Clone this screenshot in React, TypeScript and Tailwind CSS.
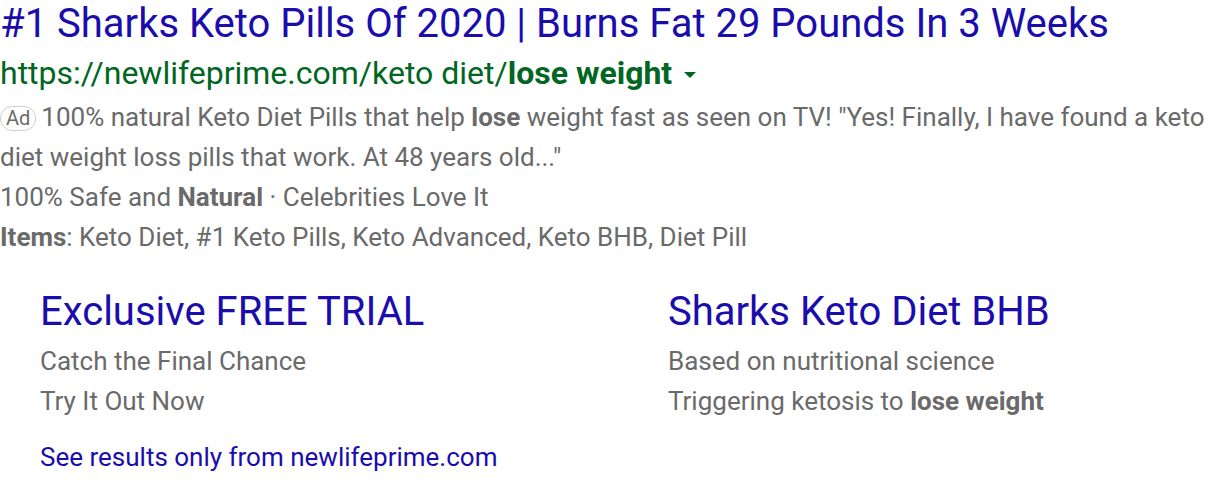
export default function App() {
  return (
    <main className="h-[480px] w-[1216px] overflow-hidden bg-white font-['Roboto',sans-serif]">
      <a className="block text-[40px] leading-[48px] text-[#1a0dab]">
        #1 Sharks Keto Pills Of 2020 | Burns Fat 29 Pounds In 3 Weeks
      </a>
      <div className="mt-[5px] flex items-center text-[32px] leading-[40px] text-[#006621]">
        <span>
          https://newlifeprime.com/keto diet/<b className="font-bold">lose weight</b>
        </span>
        <span className="ml-[12px] mt-[4px] h-0 w-0 border-x-[6px] border-t-[6px] border-x-transparent border-t-[#006621]" />
      </div>
      <div className="mt-[4px] text-[26px] leading-[40px] text-[#6a6a6a]">
        <p>
          <span className="mr-[5px] inline-block rounded-[12px] border border-[#cfcfcf] px-[5px] align-[1px] text-[20px] leading-[23px] text-[#6a6a6a]">
            Ad
          </span>
          100% natural Keto Diet Pills that help <b className="font-bold">lose</b> weight fast as seen on TV! "Yes! Finally, I have found a keto diet weight loss pills that work. At 48 years old..."
        </p>
        <p>
          100% Safe and <b className="font-bold">Natural</b> · Celebrities Love It
        </p>
        <p>
          <b className="font-bold">Items</b>: Keto Diet, #1 Keto Pills, Keto Advanced, Keto BHB, Diet Pill
        </p>
      </div>
      <div className="mt-[31px] grid grid-cols-[628px_1fr] pl-10">
        <div>
          <a className="block text-[40px] leading-[48px] text-[#1a0dab]">Exclusive FREE TRIAL</a>
          <div className="mt-[5px] text-[26px] leading-[40px] text-[#6a6a6a]">
            <p>Catch the Final Chance</p>
            <p>Try It Out Now</p>
          </div>
        </div>
        <div>
          <a className="block text-[40px] leading-[48px] text-[#1a0dab]">Sharks Keto Diet BHB</a>
          <div className="mt-[5px] text-[26px] leading-[40px] text-[#6a6a6a]">
            <p>Based on nutritional science</p>
            <p>
              Triggering ketosis to <b className="font-bold">lose weight</b>
            </p>
          </div>
        </div>
      </div>
      <a className="mt-4 block pl-10 text-[26px] leading-[40px] text-[#1a0dab]">
        See results only from newlifeprime.com
      </a>
    </main>
  )
}
